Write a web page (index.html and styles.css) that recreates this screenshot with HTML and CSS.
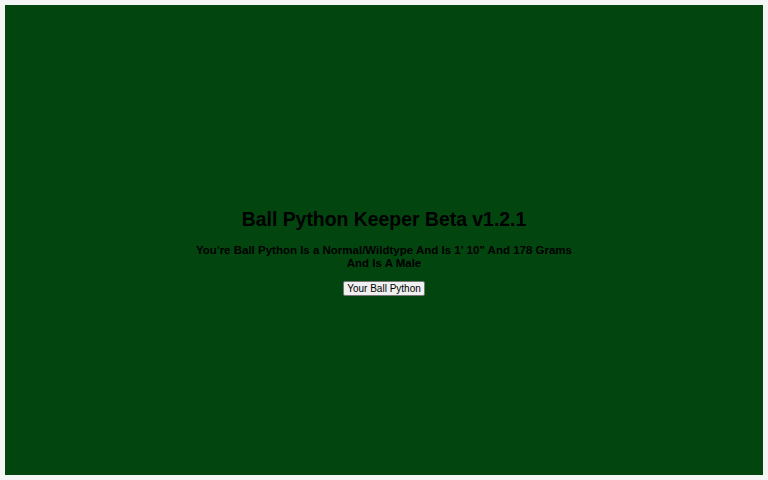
FILE: index.html
```html
<!DOCTYPE html>
<html lang="en">
<head>
    <meta charset="UTF-8">
    <meta name="viewport" content="width=device-width, initial-scale=1.0">
    <title>Ball Python Keeper</title>
    <link rel="stylesheet" href="styles.css">
</head>
<body>
    <div class="container">
        <h1>Ball Python Keeper Beta v1.2.1</h1>
        <p class="info">You're Ball Python Is a Normal/Wildtype And Is 1' 10" And 178 Grams<br>And Is A Male</p>
        <button class="python-btn">Your Ball Python</button>
    </div>
</body>
</html>
```

FILE: styles.css
```css
body {
    font-family: "Liberation Sans", Arial, sans-serif;
    background-color: #f4f5f4;
    margin: 5px;
}
.container {
    height: 446px;
    padding-top: 24px;
    background-color: #02450f;
    display: flex;
    flex-direction: column;
    align-items: center;
    justify-content: center;
    text-align: center;
    color: #000;
}
h1 {
    font-size: 19.4px;
    margin: 0 0 13px;
}
.info {
    font-size: 11.5px;
    font-weight: bold;
    line-height: 13px;
    margin: 0 0 11px;
}
.python-btn {
    font-family: "Liberation Sans", Arial, sans-serif;
    font-size: 10px;
    padding: 1px 3px;
    background: #f0f0f0;
    border: 1px solid #767676;
    border-radius: 2px;
}
```
